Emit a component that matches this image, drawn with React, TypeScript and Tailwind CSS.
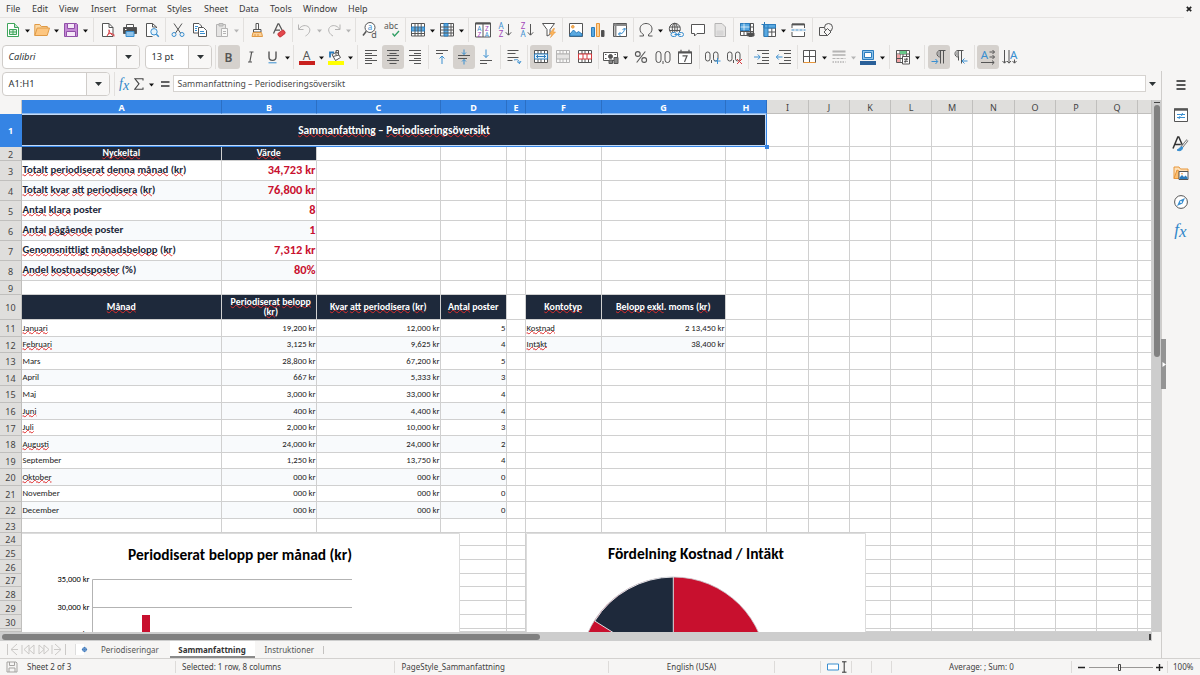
import React from "react";

type Kids = { children?: React.ReactNode };

const K = "#555555";
const B = "#3a8fd0";

/* ---------- toolbar primitives ---------- */

function Ico({ children, on, dim }: Kids & { on?: boolean; dim?: boolean }) {
  return (
    <div className={"flex h-6 w-[22px] shrink-0 items-center justify-center rounded-[3px] " + (on ? "bg-[#d5d1cd] " : "") + (dim ? "opacity-40" : "")}>
      <svg className="overflow-visible" width="16" height="16" viewBox="0 0 16 16" fill="none" stroke={K} strokeWidth="1">
        {children}
      </svg>
    </div>
  );
}

function Caret({ dim }: { dim?: boolean }) {
  return (
    <div className="flex h-6 w-[7px] shrink-0 items-center justify-center pt-0.5">
      <svg width="5" height="4" viewBox="0 0 5 4">
        <path d="M0 .5h5L2.5 3.5z" fill={dim ? "#b5b5b5" : "#111"} />
      </svg>
    </div>
  );
}

function Sep({ w = "w-[5px]" }: { w?: string }) {
  return (
    <div className={"flex h-6 shrink-0 justify-center " + w}>
      <div className="h-full w-px bg-[#e2e0de]" />
    </div>
  );
}

const T = ({ x, y, s, c = K, w = 400, children }: Kids & { x: number; y: number; s: number; c?: string; w?: number }) => (
  <text x={x} y={y} fontSize={s} fill={c} stroke="none" fontWeight={w} textAnchor="middle" fontFamily="Noto Sans, sans-serif">
    {children}
  </text>
);

const Grid = ({ c = K }: { c?: string }) => <path d="M1.500 1.500h13v12h-13zM1.500 5h13M1.500 9.500h13M5 1.500v12M8 1.500v12M11.500 1.500v12" stroke={c} fill="#fff" />;

/* ---------- menu and toolbars ---------- */

const MENUS: [string, string][] = [
  ["File", "w-[26px]"],
  ["Edit", "w-[27px]"],
  ["View", "w-[32px]"],
  ["Insert", "w-[35px]"],
  ["Format", "w-[41px]"],
  ["Styles", "w-[37px]"],
  ["Sheet", "w-[35px]"],
  ["Data", "w-[31px]"],
  ["Tools", "w-[33px]"],
  ["Window", "w-[45px]"],
  ["Help", "w-[30px]"],
];

function MenuBar() {
  return (
    <div className="flex h-[17px] shrink-0 items-center pl-[6px] text-[9px] text-[#3b3b3b]">
      {MENUS.map(([m, w]) => (
        <span key={m} className={w}>{m}</span>
      ))}
      <svg className="mr-[8px] ml-auto" width="6" height="6" viewBox="0 0 6 6">
        <path d="M.8.8l4.4 4.4M5.2.8L.8 5.2" stroke="#222" strokeWidth="1.700" />
      </svg>
    </div>
  );
}

function StandardBar() {
  return (
    <div className="mr-4 flex h-7 shrink-0 items-center border-t border-[#e6e4e2] pb-[3px] pl-[2px]">
      <Ico>
        <path d="M2.500 1.500h7l4 4v9h-11z" stroke="#3fa55b" fill="#fff" />
        <path d="M9.500 1.500v4h4" stroke="#3fa55b" fill="#bfe5c8" />
        <path d="M4.500 7.500h7v5h-7zM4.500 10h7M8 7.500v5" stroke="#3fa55b" fill="#d9f0de" />
      </Ico>
      <Caret />
      <Ico>
        <path d="M.8 13.500V2.500h5l1.500 2h6v2" stroke="#e09a45" fill="#fbd9a5" />
        <path d="M.8 13.500L3.200 6h12.300l-2.300 7.500z" stroke="#e09a45" fill="#fdc680" />
      </Ico>
      <Caret />
      <Ico>
        <path d="M1.500 1.500h12l1 1v12h-13z" stroke="#9150a8" fill="#c58ad6" />
        <path d="M4.500 1.500h7v5h-7zM3.500 9.500h9v5h-9z" stroke="#9150a8" fill="#f5e8f8" />
      </Ico>
      <Caret />
      <Sep w="w-[8px]" />
      <Ico>
        <path d="M2.500 1.500h6.500l4 4v9h-10.500z" fill="#fff" />
        <path d="M9 1.500v4h4" />
        <path d="M7 14c1.500-2 2.500-4 2-6.500M7.500 12.500c2-1.500 4.500-1.500 7 .5M9 8c.5 3 2.500 5.500 5.500 6" stroke="#d8484d" />
      </Ico>
      <Ico>
        <path d="M4.500 5V2.500h7V5" fill="#fff" />
        <path d="M1.500 5.500h13v6h-13z" fill="#4d4d4d" />
        <path d="M4 9.500h8v5H4z" fill="#8fc3ea" stroke="#3a8fd0" />
        <path d="M3 7.500h1.500" stroke="#fff" />
      </Ico>
      <Ico>
        <path d="M12.500 6V5l-4-3.500h-6v13h6" fill="#fff" />
        <path d="M8.500 1.500V5h4" />
        <circle cx="10" cy="9.800" r="3.200" stroke={B} fill="#e6f3fb" />
        <path d="M12.400 12.200l2.400 2.500" stroke={B} strokeWidth="1.400" />
      </Ico>
      <Sep w="w-[4px]" />
      <Ico>
        <path d="M4 1.500l6.500 9.500M12 1.500L5.500 11" />
        <circle cx="4" cy="12.500" r="2" stroke={B} />
        <circle cx="12" cy="12.500" r="2" stroke={B} />
      </Ico>
      <Ico>
        <path d="M1.500 1.500H7l2.500 2.500v7h-8z" fill="#fff" />
        <path d="M6.500 5.500h5l3 3v6h-8z" fill="#fff" />
        <path d="M3 4.500h3M3 6.500h2M3 8.500h2M8 9.500h4M8 11.500h5" stroke={B} />
      </Ico>
      <Ico dim>
        <path d="M2.500 2.500h9v12h-9z" fill="#ccc" />
        <path d="M5 1.500h4v2.500H5z" fill="#999" />
        <path d="M7.500 6.500h6v8h-6z" fill="#fff" />
        <path d="M9 9.500h3M9 11.500h3" />
      </Ico>
      <Caret dim />
      <Sep w="w-[6px]" />
      <Ico>
        <path d="M7 1.500h2.500v6H7z" fill="#fff" />
        <path d="M4.500 7.500h7.500v2.500H4.500z" fill="#fff" />
        <path d="M4 10.500h8.500l1 4h-10.500z" fill="#fcd199" stroke="#e09a45" />
        <path d="M6 14v-2M9 14v-2" stroke="#e09a45" />
      </Ico>
      <Ico>
        <path d="M2.500 11.500L7 1.800h.8L11 8M4.300 8.200H9" strokeWidth="1.300" />
        <rect x="7" y="9.500" width="7" height="4" rx="1" transform="rotate(-38 10.500 11.500)" fill="#e5484d" stroke="#c9353a" />
      </Ico>
      <Sep w="w-[4px]" />
      <Ico dim>
        <path d="M1.500 2.500v5h5M1.800 7.200C4.500 3 9.500 2.500 12 5.500c2.300 3-.5 7-3.500 8.500" />
      </Ico>
      <Caret dim />
      <Ico dim>
        <path d="M14 2.500v5H9M13.700 7.200C11 3 6 2.500 3.500 5.500 1.200 8.500 4 12.500 7 14" />
      </Ico>
      <Caret dim />
      <Sep w="w-[7px]" />
      <Ico>
        <circle cx="8" cy="5.500" r="5" fill="#fff" />
        <path d="M4.300 9.200L1 13.500" strokeWidth="1.500" />
        <T x={8} y={8.200} s={8} c={B}>a</T>
        <T x={12} y={15.500} s={9}>d</T>
      </Ico>
      <Ico>
        <T x={7} y={7.300} s={8.500}>abc</T>
        <path d="M8.500 11.500l2 2.500L15 9" stroke="#2f9e63" strokeWidth="1.300" />
      </Ico>
      <Sep w="w-[4px]" />
      <Ico>
        <path d="M1.500 1.500h13v12.500h-13z" fill="#fff" />
        <path d="M1.500 5h13v4h-13z" fill="#5aa9e0" stroke="#2b7cbd" />
        <path d="M5 1.500V14M8 1.500V14M11.200 1.500V14M1.500 11.500h13" />
      </Ico>
      <Caret />
      <Ico>
        <path d="M1.500 1.500h13v12.500h-13z" fill="#fff" />
        <path d="M5 1.500h4V14H5z" fill="#5aa9e0" stroke="#2b7cbd" />
        <path d="M1.500 5h13M1.500 8h13M1.500 11h13M12 1.500V14" />
      </Ico>
      <Caret />
      <Sep w="w-[7px]" />
      <Ico>
        <path d="M.5 1h15v14H.5zM8 1v14" fill="#fff" />
        <path d="M.5 1.500h15" strokeWidth="2" />
        <T x={4.300} y={8.500} s={6.500} c={B}>A</T>
        <T x={4.300} y={14.500} s={6.500} c="#a347ba">Z</T>
        <T x={11.800} y={8.500} s={6.500} c="#a347ba">Z</T>
        <T x={11.800} y={14.500} s={6.500} c={B}>A</T>
      </Ico>
      <Ico>
        <T x={4} y={7} s={8} c={B}>A</T>
        <T x={4} y={15.300} s={8} c="#a347ba">Z</T>
        <path d="M11.500 2v11M8.800 10.300l2.700 2.900 2.700-2.900" />
      </Ico>
      <Ico>
        <T x={4} y={7} s={8} c="#a347ba">Z</T>
        <T x={4} y={15.300} s={8} c={B}>A</T>
        <path d="M11.500 2v11M8.800 10.300l2.700 2.900 2.700-2.900" />
      </Ico>
      <Ico>
        <path d="M1.500 1.500h12l-4.500 6v5l-3 1.500V7.500z" fill="#fff" />
        <path d="M12.500 6.500L8.500 12h2.500l-1.500 3.500 5-5.500h-2.500l1.500-3.500z" fill="#fcb65c" stroke="#e8963a" strokeWidth=".6" />
      </Ico>
      <Sep />
      <Ico>
        <path d="M1.500 1.500h13v13h-13z" fill="#fff" />
        <path d="M2 12l3.500-4 3 3 2-1.500L14 12v2H2z" fill="#5aa9e0" stroke="#2b7cbd" />
        <circle cx="4.800" cy="4.800" r="1.300" fill="#fcb65c" stroke="#e8963a" />
      </Ico>
      <Ico>
        <path d="M1.500 5.500h3v9h-3z" fill="#5aa9e0" stroke="#2b7cbd" />
        <path d="M6.500 1.500h3v13h-3z" fill="#fdd196" stroke="#e8963a" />
        <path d="M11.500 8.500h2.500v6h-2.500z" fill="#4d4d4d" />
      </Ico>
      <Ico>
        <path d="M1.500 1.500h13v13h-13z" fill="#fff" />
        <path d="M1.500 3h13M3.500 1.500v13" strokeWidth="2" stroke="#8a8a8a" />
        <path d="M6.500 12c4 0 6-2 6-5.500M8.500 10l-2 2 2 2M10.500 8l2-2 2 2" stroke={B} />
      </Ico>
      <Sep w="w-[4px]" />
      <Ico>
        <path d="M1.500 14h4v-1.500C3.500 11.500 2 9.500 2 7c0-3.200 2.500-5.500 6-5.500S14 3.800 14 7c0 2.500-1.500 4.500-3.500 5.500V14h4" />
      </Ico>
      <Caret />
      <span className="w-px" />
      <Ico>
        <circle cx="6.800" cy="6.800" r="5.500" />
        <ellipse cx="6.800" cy="6.800" rx="2.500" ry="5.500" />
        <path d="M1.500 5h10.600M1.500 8.500h10.600M6.800 1.300v11" />
        <rect x="3.500" y="10" width="12" height="5" fill="#f6f5f4" stroke="none" />
        <rect x="3" y="10.500" width="5.500" height="4" rx="2" stroke={B} />
        <rect x="10" y="10.500" width="5.500" height="4" rx="2" stroke={B} />
        <path d="M6.500 12.500h6" stroke={B} />
      </Ico>
      <Ico>
        <path d="M1.500 2.500h13v9H7L4.500 14v-2.500h-3z" fill="#fff" />
      </Ico>
      <Ico dim>
        <path d="M3 1.500h7l3.500 3.500v9.500H3z" fill="#ccc" />
        <path d="M5 9h6v4H5z" fill="#aaa" stroke="#aaa" />
      </Ico>
      <Sep />
      <Ico>
        <Grid />
        <path d="M1.500 1.500h9v7h-9z" fill="#5aa9e0" stroke="#2b7cbd" />
        <path d="M1.500 5h9M5 1.500v7" stroke="#fff" strokeWidth=".7" />
        <path d="M8.500 11h6.500v3H8.500z" fill="#4d4d4d" />
        <path d="M10 9.500h3.500M10 14.500h3.500" />
      </Ico>
      <Ico>
        <path d="M3 2.500h11.500v12H3zM3 6h11.500M3 10h11.500M10.800 2.500v12" fill="#fff" />
        <path d="M3 2.500h11.500V6H3zM3 2.500h4v12H3z" fill="#5aa9e0" stroke="#2b7cbd" />
        <path d="M.5 2.500h6M3.500 0v5" stroke="#2b7cbd" />
      </Ico>
      <Caret />
      <Ico>
        <path d="M2 6V2h12.500v4M2 10v4.500h12.500V10" fill="#fff" />
        <path d="M2 2.500h12.500" strokeWidth="1.800" />
        <path d="M1.500 8h14" stroke={B} strokeDasharray="3 1" />
      </Ico>
      <Sep w="w-[6px]" />
      <Ico>
        <path d="M1.500 5.500h8v8h-8z" fill="#f6f5f4" />
        <circle cx="10.500" cy="5.500" r="4" fill="#f6f5f4" />
        <path d="M9.500 6.500l3.500 3.500-3.500 3.500L6 10z" fill="#f6f5f4" />
      </Ico>
    </div>
  );
}

const arrowDown = "M0 0l7 0-3.500 4z";
function Combo({ text, w, italic }: { text: string; w: string; italic?: boolean }) {
  return (
    <div className={"flex h-6 shrink-0 rounded-[4px] border border-[#d0cdca] bg-white text-[9.300px] text-[#2e3436] " + w}>
      <span className={"flex flex-1 items-center pl-[5.500px] " + (italic ? "italic" : "")}>{text}</span>
      <div className="flex w-[23px] items-center justify-center rounded-r-[3px] border-l border-[#d0cdca] bg-[#f8f7f6]">
        <svg width="7" height="4"><path d={arrowDown} fill="#2e3436" /></svg>
      </div>
    </div>
  );
}

function FormattingBar() {
  return (
    <div className="flex h-[26px] shrink-0 items-center pb-[2px] pl-[2px]">
      <Combo text="Calibri" w="w-[138px]" italic />
      <span className="w-[5px]" />
      <Combo text="13 pt" w="w-[67px]" />
      <Sep w="w-[6px]" />
      <Ico on><T x={7.500} y={12.500} s={12} w={600}>B</T></Ico>
      <Ico><path d="M6.500 3h4M5 13h4M8.700 3L6.800 13" strokeWidth="1.200" /></Ico>
      <Ico>
        <path d="M4 2.500v5.500c0 4.500 7 4.500 7 0V2.500" strokeWidth="1.400" />
        <path d="M3.500 13.800h8" stroke={B} />
      </Ico>
      <Caret />
      <Sep w="w-[5px]" />
      <Ico>
        <T x={7.500} y={10.500} s={12}>A</T>
        <path d="M0 12h16v4H0z" fill="#c9211e" stroke="none" />
      </Ico>
      <Caret />
      <Ico>
        <path d="M4 5.500l5-2.500 3.500 5.500-5 3z" fill="#fff" />
        <path d="M8 6V1.500h2.500V5M5 7.500l6-1.500" />
        <path d="M2 8.500V3.500h4" stroke="#2b7cbd" strokeWidth="1.800" />
        <path d="M0 12h16v4H0z" fill="#ffff00" stroke="none" />
      </Ico>
      <Caret />
      <Sep w="w-[6px]" />
      <Ico><path d="M2 1.500h12M2 4.500h7M2 6.500h12M2 9.500h7M2 11.500h12M2 14.500h7" /></Ico>
      <Ico on><path d="M2 1.500h12M4.500 4.500h7M2 6.500h12M4.500 9.500h7M2 11.500h12M4.500 14.500h7" /></Ico>
      <Ico><path d="M2 1.500h12M7 4.500h7M2 6.500h12M7 9.500h7M2 11.500h12M7 14.500h7" /></Ico>
      <Sep />
      <Ico>
        <path d="M2 1.500h12M2 4.500h7" />
        <path d="M8 15V7M5.500 9.500L8 7l2.500 2.500" stroke={B} />
      </Ico>
      <Ico on>
        <path d="M2 6.500h12M2 9.500h9" />
        <path d="M8 .5v5M6 3.500l2 2 2-2M8 15.500v-5M6 12.500l2-2 2 2" stroke={B} />
      </Ico>
      <Ico>
        <path d="M2 11.500h12M2 14.500h7" />
        <path d="M8 .5v8M5.500 6L8 8.500 10.500 6" stroke={B} />
      </Ico>
      <Sep w="w-[6px]" />
      <Ico>
        <path d="M1.500 1.500h11M1.500 4.500h8M1.500 8.500h11M1.500 11.500h5" />
        <path d="M8 11c4-1 5 0 5.500 3.500M11 12.500l2.500 2 1.500-2.500" stroke={B} />
      </Ico>
      <Sep />
      <Ico on>
        <Grid />
        <path d="M1.500 5h13v5h-13z" fill="#e8f4fc" stroke="#2b7cbd" />
        <path d="M3 7.500h10M5 6L3.500 7.500 5 9M11 6l1.500 1.500L11 9" stroke="#2b7cbd" />
      </Ico>
      <Ico dim>
        <Grid />
        <path d="M1.500 5h13v5h-13z" fill="#ccc" />
      </Ico>
      <Ico>
        <Grid />
        <path d="M1.500 5h13v5h-13zM6 5v5M10 5v5" fill="#fff" stroke="#d8383d" />
      </Ico>
      <Sep w="w-[4px]" />
      <Ico>
        <path d="M.5 3.500h14v8H.5z" fill="#fff" />
        <circle cx="7.500" cy="7.500" r="2" fill={K} />
        <path d="M2 5.500h1.500M2 9.500h1.500M11.500 5.500H13" />
        <path d="M6 11h3.500v3.500H6zM11 8.500h4v6h-4z" fill="#888" />
      </Ico>
      <Caret />
      <span className="w-px" />
      <Ico>
        <circle cx="4.800" cy="5" r="2.400" strokeWidth="1.100" />
        <circle cx="11.200" cy="11" r="2.400" strokeWidth="1.100" />
        <path d="M12.300 2.500L3.700 13.500" strokeWidth="1.100" />
      </Ico>
      <Ico>
        <rect x="1" y="2.500" width="5" height="11" rx="2.500" />
        <rect x="10" y="2.500" width="5" height="11" rx="2.500" />
        <path d="M8 12v3" />
      </Ico>
      <Ico>
        <path d="M1.500 3h13v11.500h-13z" fill="#fff" />
        <path d="M1 3.500h14" strokeWidth="2" />
        <path d="M4 .8v2M12 .8v2M5.500 6.800h4.500L7.500 13" strokeWidth="1.200" />
      </Ico>
      <Sep w="w-[6px]" />
      <Ico>
        <rect x=".5" y="3" width="4.500" height="9" rx="2.200" />
        <rect x="8.500" y="3" width="4.500" height="9" rx="2.200" />
        <path d="M6.500 11v3" />
        <path d="M12.500 9v6M9.500 12h6" stroke={B} />
      </Ico>
      <Ico>
        <rect x=".5" y="3" width="4.500" height="9" rx="2.200" />
        <rect x="8.500" y="3" width="4.500" height="9" rx="2.200" />
        <path d="M6.500 11v3" />
        <path d="M10 10l5 5M15 10l-5 5" stroke="#d8383d" />
      </Ico>
      <Sep />
      <Ico>
        <path d="M3 1.500h12M8 4.500h7M8 8.500h7M8 11.500h7M3 14.500h12" />
        <path d="M0 8h6M3.800 5.500L6.200 8l-2.400 2.500" stroke={B} />
      </Ico>
      <Ico>
        <path d="M3 1.500h12M8 4.500h7M8 8.500h7M8 11.500h7M3 14.500h12" />
        <path d="M6.500 8h-6M2.700 5.500L.3 8l2.400 2.500" stroke={B} />
      </Ico>
      <Sep w="w-[4px]" />
      <Ico>
        <path d="M1.500 1.500h12v12h-12zM7.500 1.500v12M1.500 7.500h12" fill="#fff" />
        <path d="M1.500 13.500h12" stroke="#e8963a" />
      </Ico>
      <Caret />
      <Ico dim>
        <path d="M1.500 2.500h13" strokeWidth="2" />
        <path d="M1.500 6h13" strokeWidth="1.600" />
        <path d="M1.500 9.500h13" strokeDasharray="3 1" />
        <path d="M1.500 13h13" strokeDasharray="1.500 1" strokeWidth="1.500" />
      </Ico>
      <Caret dim />
      <Ico>
        <path d="M2.500 1.500h11v9h-11z" fill="#8fc3ea" stroke="#2b7cbd" />
        <path d="M4.500 3.500h7v5h-7z" fill="#fff" stroke="#2b7cbd" />
        <path d="M0 12h16v4H0z" fill="#2a6099" stroke="none" />
      </Ico>
      <Caret />
      <Sep w="w-[6px]" />
      <Ico>
        <Grid />
        <path d="M5 2h6.500v3H5z" fill="#67c98a" stroke="none" />
        <path d="M2 5.500h3v3.500H2zM2 10h3v3H2z" fill="#f2a3a5" stroke="none" />
        <path d="M7.500 7.500h7v7.500h-7z" fill="#fff" />
        <path d="M9 10.200h4M9 12.300h4M12 8.800l-2 5" />
      </Ico>
      <Caret />
      <Sep w="w-[7px]" />
      <Ico on>
        <path d="M14.500 1.500H9C5 1.500 5 8 9 8h.5M9.500 1.500v13M12.500 1.500v13" />
        <path d="M9 2C6 2 6 7.500 9 7.500z" fill="#aaa" stroke="none" />
        <path d="M.5 12.500h6M4.500 10l2.200 2.500L4.500 15" stroke={B} />
      </Ico>
      <Ico>
        <path d="M10.500 1.500H5C1 1.500 1 8 5 8h.5M5.500 1.500v10M8.500 1.500v13" />
        <path d="M5.500 2C2 2 2 7.500 5.500 7.500z" fill="#aaa" stroke="none" />
        <path d="M14.500 12h-5.500M11.500 9.500L9 12l2.500 2.500" stroke={B} />
      </Ico>
      <Sep />
      <Ico on>
        <T x={4.500} y={9.500} s={11.500} c={B}>A</T>
        <path d="M9.500 3h5M12.500 1l2 2-2 2M9.500 8h5M12.500 6l2 2-2 2M1 13.500h13M12 11.500l2.200 2-2.200 2" />
      </Ico>
      <Ico>
        <path d="M2.500 1v13M.5 12l2 2.200 2-2.200M7 1v13M5 12l2 2.200 2-2.200M12.500 10.500V14M10.500 12l2 2.200 2-2.200" />
        <T x={11.800} y={9.500} s={11.500} c={B}>A</T>
      </Ico>
    </div>
  );
}

function Fx({ big }: { big?: boolean }) {
  return (
    <span className={"font-['Liberation_Serif',serif] leading-none italic text-[#2f86c9] " + (big ? "text-[17px]" : "text-[14px]")}>
      f<span className="relative top-[2px]">x</span>
    </span>
  );
}

function FormulaBar() {
  return (
    <div className="flex h-[29px] shrink-0 items-start pt-[1px] pl-[2px]">
      <Combo text="A1:H1" w="w-[108px]" />
      <div className="flex h-6 w-[63px] items-center">
        <Sep w="w-[9px]" />
        <Fx />
        <svg className="ml-[5px]" width="10" height="12" viewBox="0 0 10 12" fill="none" stroke="#444">
          <path d="M9 2.500V.7H.8L5 5.800.8 11.200H9V9.500" strokeWidth="1.100" />
        </svg>
        <span className="w-[4px]" />
        <Caret />
        <svg className="ml-[6px]" width="9" height="6"><path d="M0 1h8.500M0 5h8.500" stroke="#333" strokeWidth="1.500" /></svg>
      </div>
      <div className="mt-[3px] flex h-[17px] w-[973px] items-center border border-[#d6d3d0] bg-white pt-px pl-[3.500px] text-[8.660px] text-[#4a4a4a]">
        Sammanfattning – Periodiseringsöversikt
      </div>
      <div className="flex h-6 w-[13px] items-center justify-center">
        <svg width="7" height="4"><path d={arrowDown} fill="#2e3436" /></svg>
      </div>
    </div>
  );
}

/* ---------- spreadsheet ---------- */

const COLS: [string, string][] = [
  ["A", "w-[200px]"], ["B", "w-[95px]"], ["C", "w-[124px]"], ["D", "w-[66px]"], ["E", "w-[19px]"],
  ["F", "w-[76px]"], ["G", "w-[124px]"], ["H", "w-[41px]"], ["I", "w-[42px]"], ["J", "w-[41px]"],
  ["K", "w-[41px]"], ["L", "w-[41px]"], ["M", "w-[41px]"], ["N", "w-[42px]"], ["O", "w-[41px]"],
  ["P", "w-[41px]"], ["Q", "w-[41px]"], ["", "w-[14px]"],
];

const ROWS: string[] = [
  "h-[33px]", "h-[14px]", "h-[20px]", "h-[20px]", "h-[20px]", "h-[20px]", "h-[20px]", "h-[20px]", "h-[14px]", "h-[25px]",
  "h-[17px]", "h-[16px]", "h-[17px]", "h-[16px]", "h-[17px]", "h-[17px]", "h-[16px]", "h-[17px]", "h-[16px]", "h-[17px]",
  "h-[16px]", "h-[17px]", "h-[14px]", "h-[13px]", "h-[14px]", "h-[14px]", "h-[13px]", "h-[14px]", "h-[14px]", "h-[14px]", "h-[3px]",
];

/* A leading "~" marks a word that the spell checker underlines. */
const METRICS: [string, string][] = [
  ["~Totalt ~periodiserat ~denna ~månad (~kr)", "34,723 kr"],
  ["~Totalt ~kvar ~att ~periodisera (~kr)", "76,800 kr"],
  ["~Antal ~klara poster", "8"],
  ["~Antal ~pågående poster", "1"],
  ["~Genomsnittligt ~månadsbelopp (~kr)", "7,312 kr"],
  ["~Andel ~kostnadsposter (%)", "80%"],
];

const MONTHS: string[][] = [
  ["~Januari", "19,200 kr", "12,000 kr", "5"],
  ["~Februari", "3,125 kr", "9,625 kr", "4"],
  ["Mars", "28,800 kr", "67,200 kr", "5"],
  ["April", "667 kr", "5,333 kr", "3"],
  ["Maj", "3,000 kr", "33,000 kr", "4"],
  ["~Juni", "400 kr", "4,400 kr", "4"],
  ["~Juli", "2,000 kr", "10,000 kr", "3"],
  ["~Augusti", "24,000 kr", "24,000 kr", "2"],
  ["September", "1,250 kr", "13,750 kr", "4"],
  ["~Oktober", "000 kr", "000 kr", "0"],
  ["November", "000 kr", "000 kr", "0"],
  ["December", "000 kr", "000 kr", "0"],
];

function Spell({ text }: { text: string }) {
  return (
    <span>
      {text.split(/(~[^\s().]+)/).map((p, i) =>
        p.startsWith("~") ? (
          <span key={i} className="underline decoration-[#e02b2b] decoration-wavy decoration-[0.700px] underline-offset-[-1px] [text-decoration-skip-ink:none]">
            {p.slice(1)}
          </span>
        ) : (
          p
        )
      )}
    </span>
  );
}

const HEAD = "justify-center bg-[#1e293b] text-white font-bold text-[9.900px] leading-[10px] text-center pt-px";

function cell(r: number, c: string): { text?: string; cls: string } {
  if (!c) return { cls: "bg-white" };
  if (r === 2 && (c === "A" || c === "B")) return { text: c === "A" ? "~Nyckeltal" : "~Värde", cls: HEAD };
  if (r >= 3 && r <= 8) {
    const z = r % 2 ? "bg-white " : "bg-[#f8fafc] ";
    const m = METRICS[r - 3];
    if (c === "A") return { text: m[0], cls: z + "pl-[0.500px] font-bold text-[10.750px] text-[#1e293b]" };
    if (c === "B") return { text: m[1], cls: z + "justify-end font-bold text-[12.400px] text-[#c8102e]" };
  }
  if (r === 10) {
    const t: Record<string, string> = {
      A: "~Månad", B: "~Periodiserat ~belopp (~kr)", C: "~Kvar ~att ~periodisera (~kr)", D: "~Antal poster",
      F: "~Kontotyp", G: "~Belopp ~exkl. moms (~kr)",
    };
    if (t[c]) return { text: t[c], cls: HEAD + (c === "B" ? " px-1 whitespace-normal" : "") };
  }
  if (r >= 11 && r <= 22) {
    const z = r % 2 ? "bg-white " : "bg-[#f8fafc] ";
    const i = "ABCD".indexOf(c);
    if (i >= 0) return { text: MONTHS[r - 11][i], cls: z + "text-[8.700px] text-[#222] " + (i ? "justify-end" : "pl-[0.500px]") };
    if (r < 13 && c === "F") return { text: r === 11 ? "~Kostnad" : "~Intäkt", cls: z + "text-[8.700px] text-[#222] pl-[0.500px]" };
    if (r < 13 && c === "G") return { text: r === 11 ? "2 13,450 kr" : "38,400 kr", cls: z + "justify-end text-[8.700px] text-[#222]" };
  }
  return { cls: "bg-white" };
}

function Sheet() {
  return (
    <div className="relative h-[532px] w-[1152px] shrink-0 overflow-hidden">
      <div className="flex h-[14px] text-[9px]">
        <div className="w-[22px] border-r border-[#c9c7c5] bg-[#f6f5f4]" />
        {COLS.map(([n, w], i) => (
          <div key={i} className={"flex items-center justify-center border-r border-b pt-px leading-none " + w + (i < 8 ? " border-[#2b6fc4] border-b-[#8bb8ee] bg-[#3584e4] font-bold text-white" : " border-[#c0bfbd] bg-[#dfdedc] text-[#444]")}>
            {n}
          </div>
        ))}
      </div>
      {ROWS.map((h, ri) => {
        const r = ri + 1;
        return (
          <div key={r} className={"flex " + h}>
            <div className={"flex w-[22px] shrink-0 items-center justify-center overflow-hidden border-r border-b pt-px text-[9px] leading-none " + (r === 1 ? "border-[#3584e4] bg-[#3584e4] font-bold text-white" : "border-[#c0bfbd] bg-[#dfdedc] text-[#444]")}>
              {r < 31 ? r : ""}
            </div>
            {r === 1 && (
              <div className="flex w-[745px] border-r-[1.500px] border-b-[1.500px] border-[#3584e4] bg-[#c4dbf7] pt-px pr-px pb-px font-[Carlito,Calibri,Lato,sans-serif]">
                <div className="flex flex-1 items-center justify-center bg-[#1e293b] pt-px pl-px text-[11.300px] font-bold text-white">
                  <Spell text="~Sammanfattning – ~Periodiseringsöversikt" />
                </div>
              </div>
            )}
            {COLS.slice(r === 1 ? 8 : 0).map(([n, w], i) => {
              const { text, cls } = cell(r, n);
              return (
                <div key={i} className={"flex shrink-0 items-center overflow-hidden border-r border-b border-[#d0d0d0] pr-[0.500px] font-[Carlito,Calibri,Lato,sans-serif] leading-none " + w + " " + cls}>
                  {text && <Spell text={text} />}
                </div>
              );
            })}
          </div>
        );
      })}

      <div className="absolute top-[45px] left-[765px] h-[4px] w-[4px] bg-[#3584e4]" />

      <svg className="absolute top-[433px] left-[22px]" width="438" height="100" viewBox="22 533 438 100" fontFamily="Carlito, Calibri, Lato, sans-serif">
        <path d="M22 533h437v100H22z" fill="#fff" />
        <path d="M22 533.500h437.500V634" fill="none" stroke="#dcdcdc" />
        <text x="240" y="560" textAnchor="middle" fontSize="16.300" fontWeight="700" textLength="224" lengthAdjust="spacingAndGlyphs">Periodiserat belopp per månad (kr)</text>
        <g stroke="#b3b3b3">
          <path d="M92.500 579.500H352M92.500 607.500H352M92.500 579.500V633" fill="none" />
        </g>
        <g fontSize="8.900" textAnchor="end">
          <text x="89.500" y="582.200" textLength="32" lengthAdjust="spacingAndGlyphs">35,000 kr</text>
          <text x="89.500" y="610.200" textLength="32" lengthAdjust="spacingAndGlyphs">30,000 kr</text>
          <text x="89.500" y="637" textLength="32" lengthAdjust="spacingAndGlyphs">25,000 kr</text>
        </g>
        <path d="M142 615h8v20h-8z" fill="#c8102e" />
      </svg>

      <svg className="absolute top-[433px] left-[526px]" width="341" height="100" viewBox="526 533 341 100" fontFamily="Carlito, Calibri, Lato, sans-serif">
        <path d="M526 533h339v100H526z" fill="#fff" />
        <path d="M526.500 634V533.500h339V634" fill="none" stroke="#dcdcdc" />
        <text x="696" y="558.500" textAnchor="middle" fontSize="16.300" fontWeight="700" textLength="176" lengthAdjust="spacingAndGlyphs">Fördelning Kostnad / Intäkt</text>
        <circle cx="673.300" cy="670.300" r="93.300" fill="#c8102e" stroke="#c9ccd0" strokeWidth=".8" />
        <path d="M673.300 670.300V577A93.300 93.300 0 0 0 594.800 621z" fill="#1e293b" stroke="#dde0e4" strokeWidth="1" />
      </svg>
    </div>
  );
}

function SheetTabs() {
  return (
    <div className="flex h-[17px] shrink-0 items-center pl-[6px] text-[8px] text-[#555]">
      <svg width="62" height="13" viewBox="0 0 62 13" fill="none" stroke="#cbc9c7">
        <path d="M1.500 1v11M11 1L5 6.500 11 12M5 6.500h7M23 2l-5 4.500L23 11zM28 2l-5 4.500L28 11zM16 2v9M33 2l5 4.500L33 11zM38 2l5 4.500L38 11zM46 2v9M49 1l6 5.500L49 12M55 6.500h-7M59.500 1v11" />
      </svg>
      <svg className="ml-[6px]" width="14" height="13" viewBox="0 0 14 13">
        <path d="M1 1h9v11H1z" fill="#fff" />
        <path d="M1.500 1v11" stroke="#ddd" />
        <circle cx="10.500" cy="6.500" r="1.800" fill="#fff" stroke="#2a6bb5" strokeWidth="1.100" />
        <path d="M10.500 3.800v5.400M7.800 6.500h5.400" stroke="#2a6bb5" strokeWidth=".6" />
      </svg>
      <span className="ml-[13px] w-[68.500px]">Periodiseringar</span>
      <span className="flex h-full w-[85px] items-center justify-center border-b-2 border-[#8a8a8a] bg-white pt-[2px] font-bold text-[#333]">Sammanfattning</span>
      <span className="ml-[10px] w-[58.500px]">Instruktioner</span>
      <span className="h-[8px] w-px bg-[#c4c2c0]" />
    </div>
  );
}

const Bar = () => <span className="h-3 w-px shrink-0 bg-[#dddbd9]" />;

function StatusBar() {
  return (
    <div className="flex h-[17px] shrink-0 items-center border-t border-[#d3d1cf] pl-[6px] text-[8px] text-[#3f3f3f]">
      <svg className="shrink-0" width="12" height="12" viewBox="0 0 12 12" fill="none" stroke="#a5a3a1">
        <path d="M1 1h9l1 1v9H1zM3.500 1v3.500h5V1M3 11V7h6v4" />
      </svg>
      <span className="ml-[9px] w-[148px] shrink-0">Sheet 2 of 3</span>
      <Bar />
      <span className="ml-[6px] w-[212px] shrink-0">Selected: 1 row, 8 columns</span>
      <Bar />
      <span className="w-[213px] shrink-0 pl-[6.500px]">PageStyle_Sammanfattning</span>
      <Bar />
      <span className="w-[165px] shrink-0 text-center">English (USA)</span>
      <Bar />
      <span className="w-[45px] shrink-0" />
      <Bar />
      <svg className="mr-[3px] ml-[5px] shrink-0" width="22" height="12" viewBox="0 0 22 12" fill="none">
        <path d="M1.500 3h11v6h-11z" stroke={B} fill="#fff" />
        <path d="M16 .8h4.500M16 11.200h4.500M18.200.8v10.400" stroke="#333" />
      </svg>
      <Bar />
      <span className="w-[19px] shrink-0" />
      <Bar />
      <span className="w-[19px] shrink-0" />
      <Bar />
      <span className="w-[179px] shrink-0 text-center">Average: ; Sum: 0</span>
      <Bar />
      <svg className="mr-[3px] ml-[5px] shrink-0" width="87" height="9" viewBox="0 0 87 9">
        <path d="M1 4.500h7M79 4.500h7M82.500 1v7" stroke="#222" strokeWidth="1.400" />
        <path d="M12 4.500h64" stroke="#9a9896" />
        <path d="M41.500 1.500h2v6h-2z" fill="#f6f5f4" stroke="#444" />
      </svg>
      <Bar />
      <span className="ml-[5px]">100%</span>
    </div>
  );
}

function Sidebar() {
  return (
    <div className="relative mt-[26px] flex w-[39px] shrink-0 flex-col items-center border-l border-[#cfcdcb] pt-[7px] pr-px">
      <svg width="16" height="14" viewBox="0 0 16 14"><path d="M3.500 3h9M3.500 7h9M3.500 11h9" stroke="#222" strokeWidth="1.500" /></svg>
      <svg className="mt-[15px]" width="16" height="16" viewBox="0 0 16 16" fill="none" stroke={K}>
        <path d="M1.500 2h13v12.500h-13z" fill="#fff" />
        <path d="M1 2.500h14" strokeWidth="2.400" />
        <path d="M4 7.500h8M4 10.500h8M9.500 6l-1 3M7 9l-1 3" stroke={B} />
      </svg>
      <svg className="mt-[13px]" width="17" height="16" viewBox="0 0 17 16" fill="none" stroke="#333">
        <path d="M1 12.500L5.800 1h1L11 10.500M2.800 8.500h6" strokeWidth="1.500" />
        <path d="M15.500 4l-6 7.500" strokeWidth="2.500" stroke="#777" />
        <path d="M15.300 4.200l-5.500 7" stroke="#fff" />
        <path d="M10.500 11c-2-1-3 2-5.500 3 2.500 1.500 6 .5 5.500-3z" fill={B} stroke={B} />
      </svg>
      <svg className="mt-[13px]" width="16" height="16" viewBox="0 0 16 16" fill="none">
        <path d="M1 13.500V2h5l1.500 2H15v3" stroke="#e8963a" fill="#fde0b8" />
        <path d="M1 13.500h5V6L4 5z" stroke="#e8963a" fill="#fdbf70" />
        <path d="M6 6.500h9v8H6z" fill="#fff" stroke={K} />
        <path d="M6.500 12.500l2.500-2.500 2 2 1.500-1.500 2 2v1.500h-8z" fill="#2b7cbd" />
        <circle cx="9" cy="8.700" r=".8" fill="#e8963a" />
      </svg>
      <svg className="mt-[13px]" width="16" height="16" viewBox="0 0 16 16" fill="none">
        <circle cx="8" cy="8" r="6.400" stroke={K} fill="#fff" />
        <path d="M12 4L9.500 9.500 4 12l2.500-5.500z" fill={B} />
        <circle cx="8" cy="8" r="1" fill="#fff" />
      </svg>
      <div className="mt-[11px]"><Fx big /></div>
      <div className="absolute top-[268px] left-[-1px] flex h-[50px] w-[5px] items-center justify-center bg-[#949494]">
        <svg width="4" height="5"><path d="M.5 0v5L4 2.500z" fill="#fff" /></svg>
      </div>
    </div>
  );
}

export default function App() {
  return (
    <div className="flex h-[675px] w-[1200px] flex-col overflow-hidden bg-[#f6f5f4] font-['Noto_Sans',sans-serif] leading-none whitespace-nowrap">
      <MenuBar />
      <StandardBar />
      <div className="flex h-[613px] shrink-0">
        <div className="flex w-[1161px] shrink-0 flex-col">
          <FormattingBar />
          <FormulaBar />
          <div className="flex h-[532px] shrink-0">
            <Sheet />
            <div className="flex w-[9px] flex-col items-center bg-[#cdcdcd] pt-[2px]">
              <div className="h-px w-[6px] bg-[#444]" />
              <div className="mt-[2px] h-[252px] w-[6px] rounded-full bg-[#808080]" />
            </div>
          </div>
          <div className="flex h-[9px] w-[1152px] shrink-0 items-center justify-between bg-[#cdcdcd] pr-px pl-[2px]">
            <div className="h-[6px] w-[538px] rounded-full bg-[#808080]" />
            <div className="h-[6px] w-[2px] bg-[#444]" />
          </div>
          <SheetTabs />
        </div>
        <Sidebar />
      </div>
      <StatusBar />
    </div>
  );
}
